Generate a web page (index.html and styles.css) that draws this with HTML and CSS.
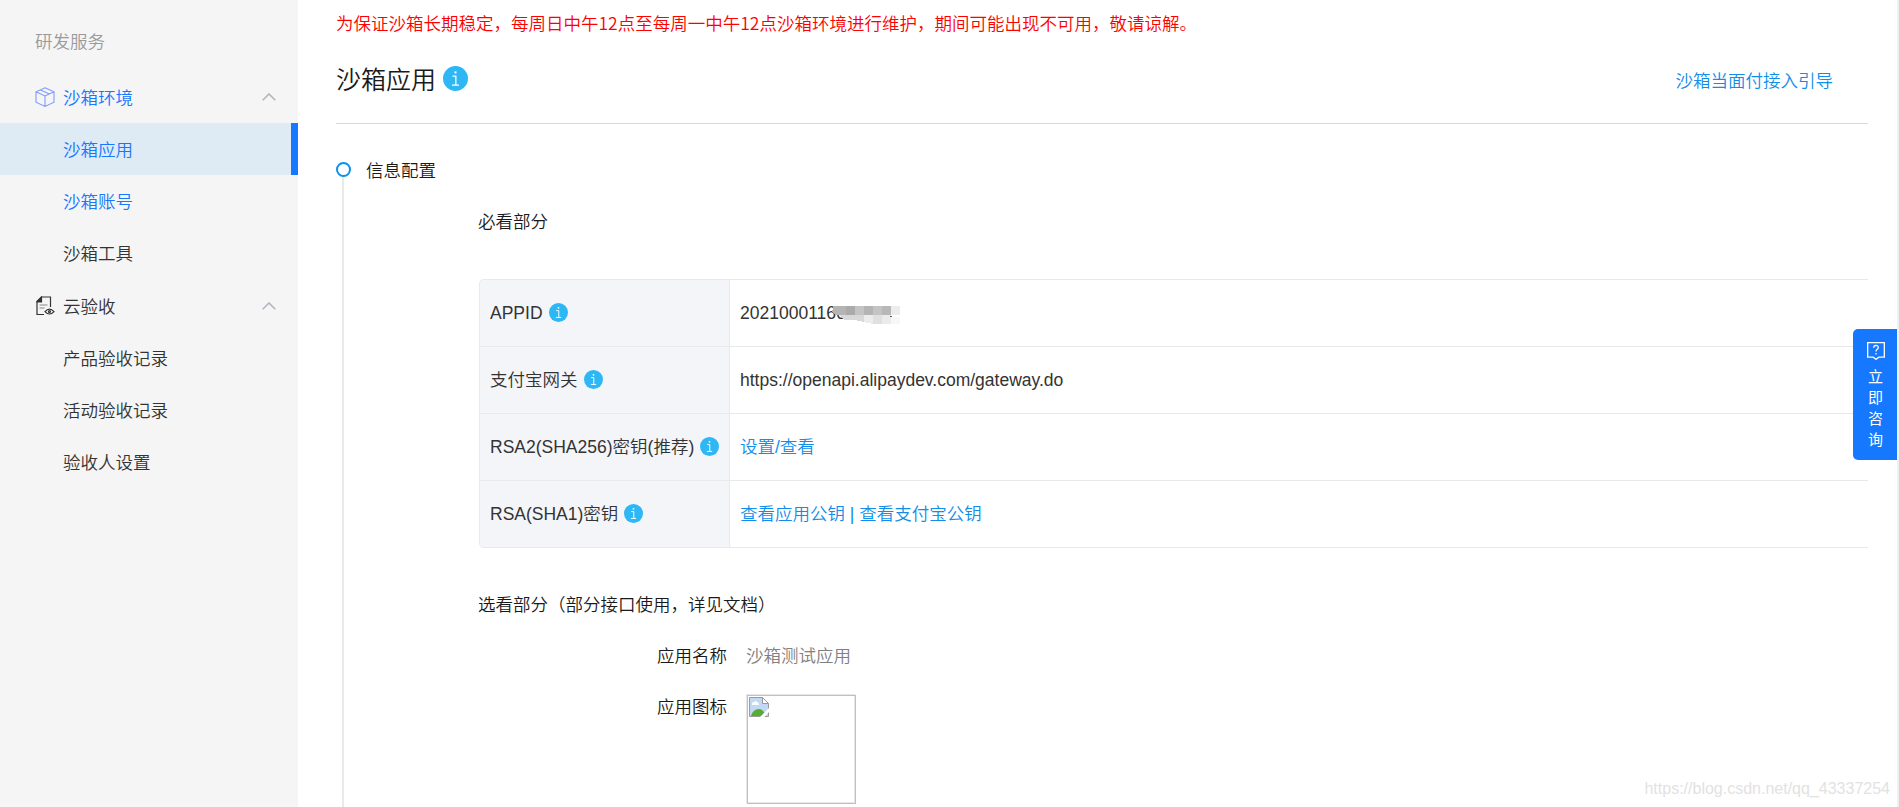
FILE: index.html
```
<!DOCTYPE html>
<html lang="zh-CN">
<head>
    <meta charset="UTF-8">
    <meta name="viewport" content="width=device-width, initial-scale=1.0">
    <title>沙箱应用</title>
    <link rel="stylesheet" href="styles.css">
</head>
<body>
    <svg class="defs" width="0" height="0">
        <symbol id="info" viewBox="0 0 20 20">
            <circle cx="10" cy="10" r="10" fill="#2db7f5"/>
            <path d="M7.6 8h2.7v6.9M7.2 15.2h5.6" fill="none" stroke="#fff" stroke-width="1"/>
            <rect x="9.2" y="4.3" width="1.6" height="1.6" fill="#fff"/>
        </symbol>
        <symbol id="arrow" viewBox="0 0 14 8">
            <path d="M.7 7.3L7 1l6.3 6.3" fill="none" stroke="#b4b4c0" stroke-width="1.6"/>
        </symbol>
    </svg>
    <div class="page">
        <nav class="sidebar">
            <div class="menu-title">研发服务</div>
            <div class="menu-group blue">
                <svg class="menu-icon" viewBox="0 0 20 20" fill="none" stroke="#7f9bff" stroke-width="1.1">
                    <path d="M10 .8l9 4v10.4l-9 4.2-9-4.2V4.800zM1 4.800l9 4.200 9-4.200M10 9v10.400M5.500 2.900l9 4.200"/>
                </svg>
                <span>沙箱环境</span>
                <svg class="menu-arrow"><use href="#arrow"/></svg>
            </div>
            <a class="menu-item active">沙箱应用</a>
            <a class="menu-item blue">沙箱账号</a>
            <a class="menu-item">沙箱工具</a>
            <div class="menu-group second">
                <svg class="menu-icon" viewBox="0 0 20 20" fill="none" stroke="#333" stroke-width="1.2">
                    <path d="M9 18.500H2V5.500L6.500 1H15.500V11"/>
                    <path d="M4.500 9H12.500M4.500 12H9.500" stroke="#888"/>
                    <path d="M2 6V5.500L6.500 1V6z" fill="#333"/>
                    <path d="M10 15.600Q14.500 10.800 19 15.600Q14.500 20.400 10 15.600z"/>
                    <circle cx="14.500" cy="15.600" r="1"/>
                </svg>
                <span>云验收</span>
                <svg class="menu-arrow"><use href="#arrow"/></svg>
            </div>
            <a class="menu-item">产品验收记录</a>
            <a class="menu-item">活动验收记录</a>
            <a class="menu-item">验收人设置</a>
        </nav>

        <main class="content">
            <p class="notice">为保证沙箱长期稳定，每周日中午12点至每周一中午12点沙箱环境进行维护，期间可能出现不可用，敬请谅解。</p>
            <header class="header">
                <h1>沙箱应用</h1>
                <svg class="info info-lg"><use href="#info"/></svg>
                <a class="guide">沙箱当面付接入引导</a>
            </header>

            <section class="step">
                <div class="step-line"><i class="dot"></i></div>
                <div class="step-main">
                    <h2>信息配置</h2>
                    <div class="step-body">
                        <h3>必看部分</h3>
                        <table class="config">
                            <tr>
                                <th>APPID<svg class="info"><use href="#info"/></svg></th>
                                <td>
                                    <span class="appid">2021000116<span>6</span>
                                        <svg class="mosaic" width="70" height="18" viewBox="0 0 70 18" shape-rendering="crispEdges">
                                            <path d="M3 0h12v9H5L1 6z" fill="#b4b4b4"/>
                                            <path d="M15 0h9v9h-9z" fill="#aaa"/>
                                            <path d="M24 0h9v9h-9zM42 0h9v9h-9z" fill="#c4c4c4"/>
                                            <path d="M33 0h9v9h-9z" fill="#b4b4b4"/>
                                            <path d="M51 0h9v9h-9z" fill="#b8b8b8"/>
                                            <path d="M60 0h9v9h-9z" fill="#ececec"/>
                                            <path d="M8 9h25v7l-9-2H13z" fill="#d8d8d8"/>
                                            <path d="M33 9h9v9l-9-2z" fill="#ececec"/>
                                            <path d="M42 9h9v9h-9z" fill="#e0e0e0"/>
                                            <path d="M51 9h9v9h-9z" fill="#ebebeb"/>
                                            <path d="M60 11h9v7h-9z" fill="#f7f7f7"/>
                                            <path d="M59 10h2v1h-2z" fill="#555"/>
                                        </svg>
                                    </span>
                                </td>
                            </tr>
                            <tr>
                                <th>支付宝网关<svg class="info"><use href="#info"/></svg></th>
                                <td>https://openapi.alipaydev.com/gateway.do</td>
                            </tr>
                            <tr>
                                <th>RSA2(SHA256)密钥(推荐)<svg class="info"><use href="#info"/></svg></th>
                                <td><a>设置/查看</a></td>
                            </tr>
                            <tr>
                                <th>RSA(SHA1)密钥<svg class="info"><use href="#info"/></svg></th>
                                <td><a>查看应用公钥 | 查看支付宝公钥</a></td>
                            </tr>
                        </table>
                        <h3>选看部分（部分接口使用，详见文档）</h3>
                        <div class="field">
                            <label>应用名称</label>
                            <span class="value">沙箱测试应用</span>
                        </div>
                        <div class="field">
                            <label>应用图标</label>
                            <div class="app-icon">
                                <div class="app-img">
                                    <svg width="20" height="20" viewBox="0 0 20 20">
                                        <path d="M.5.500h13l6 6v13H.5z" fill="#c3d7f7" stroke="#9a9a9a"/>
                                        <path d="M13.500.500v6h6z" fill="#fff" stroke="#9a9a9a"/>
                                        <path d="M3 7a2 2 0 0 1 2-2 2.500 2.500 0 0 1 4 1 1.500 1.500 0 0 1 1 2H3z" fill="#fff"/>
                                        <path d="M2 19c1-4 4-7 8-7 3 0 5 2 7 7z" fill="#56ad32"/>
                                        <path d="M20 11v4l-4.500 5H11z" fill="#fff"/>
                                    </svg>
                                </div>
                            </div>
                        </div>
                    </div>
                </div>
            </section>
        </main>
    </div>

    <a class="consult">
        <svg width="18" height="18" viewBox="0 0 18 18" fill="none" stroke="#fff" stroke-width="1.3">
            <path d="M.7.700h16.600v14.500h-5.500L9 17.300l-2.800-2.100H.7z"/>
            <path d="M6.700 5.800C6.700 2.700 11.300 2.700 11.300 5.500 11.300 7.500 9 7.200 9 9.600M9 11v1.600"/>
        </svg>
        <span>立</span><span>即</span><span>咨</span><span>询</span>
    </a>
    <div class="watermark">https://blog.csdn.net/qq_43337254</div>
</body>
</html>
```

FILE: styles.css
```
* {
    box-sizing: border-box;
}
body {
    margin: 0;
    height: 807px;
    overflow: hidden;
    background: #fff;
    color: #1a1a1a;
    font-family: "Noto Sans CJK SC", sans-serif;
    font-size: 17.5px;
    font-weight: 350;
    line-height: 26px;
}
h1, h2, h3, p {
    margin: 0;
    font-weight: 350;
}
svg {
    display: block;
}
.defs {
    position: absolute;
}
.page {
    display: flex;
    height: 807px;
    border-right: 2px solid #f0f0f0;
}

/* sidebar */
.sidebar {
    width: 298px;
    flex: none;
    background: #f5f5f5;
    color: #333;
}
.menu-title {
    height: 71px;
    padding: 28px 0 0 35px;
    color: #999;
}
.menu-group {
    display: flex;
    align-items: center;
    height: 52px;
    padding: 0 22px 0 35px;
}
.menu-group.second {
    margin-top: 1px;
}
.menu-icon {
    width: 20px;
    height: 20px;
    margin-right: 8px;
}
.menu-arrow {
    width: 14px;
    height: 8px;
    margin-left: auto;
}
.menu-item {
    display: block;
    height: 52px;
    padding-left: 63px;
    line-height: 52px;
}
.blue, .active {
    color: #1677ff;
}
.active {
    background: #deeaf4;
    border-right: 7px solid #1677ff;
}

/* content */
.content {
    flex: 1;
    display: flex;
    flex-direction: column;
    padding: 10px 29px 0 38px;
}
.notice {
    color: #f00;
}
.header {
    display: flex;
    align-items: center;
    height: 88px;
    padding-bottom: 3px;
    border-bottom: 1px solid #d9d9d9;
}
.header h1 {
    margin-top: -1px;
    font-size: 25px;
    line-height: 38px;
}
.info {
    display: inline-block;
    width: 19px;
    height: 19px;
    margin-left: 6px;
    vertical-align: -3px;
}
.info-lg {
    width: 25px;
    height: 25px;
    margin-left: 7px;
}
.guide {
    margin: 4px 35px 0 auto;
}
.guide, .config a {
    color: #108ee9;
}
.step {
    flex: 1;
    display: flex;
    padding-top: 38px;
}
.step-line {
    display: flex;
    flex-direction: column;
    width: 15px;
    margin-right: 15px;
}
.dot {
    width: 15px;
    height: 15px;
    border: 2px solid #108ee9;
    border-radius: 50%;
}
.step-line::after {
    content: "";
    flex: 1;
    width: 2px;
    margin-left: 6px;
    background: #e9e9e9;
}
.step-main {
    flex: 1;
}
h2, h3 {
    font-size: 17.5px;
    line-height: 26px;
}
.step-main h2 {
    margin-top: -5px;
}
.step-body {
    padding: 25px 0 0 112px;
}
.config {
    width: calc(100% - 1px);
    margin: 45px 0 43px 1px;
    border: 1px solid #e9e9e9;
    border-right: 0;
    border-radius: 5px 0 0 5px;
    border-spacing: 0;
    color: #333;
    font-family: "Liberation Sans", "Noto Sans CJK SC", sans-serif;
    overflow: hidden;
}
.config th, .config td {
    height: 67px;
    padding: 0 0 0 10px;
    border-bottom: 1px solid #e9e9e9;
    text-align: left;
    font-weight: 350;
}
.config tr:last-child th, .config tr:last-child td {
    height: 66px;
    border-bottom: 0;
}
.config th {
    width: 250px;
    background: #f4f5f9;
    border-right: 1px solid #e9e9e9;
    white-space: nowrap;
}
.appid {
    position: relative;
}
/* hides the last digits of the id */
.mosaic {
    position: absolute;
    left: 91px;
    top: 3px;
}
.field {
    display: flex;
    margin-top: 25px;
}
.field label {
    width: 249px;
    margin-right: 19px;
    text-align: right;
}
.value {
    color: #808080;
}
.app-icon {
    width: 109px;
    height: 109px;
    margin-top: 1px;
    border: 1px solid #e6e6e6;
}
.app-img {
    width: 109px;
    height: 109px;
    padding: 1px;
    border: 1px solid #c0c0c0;
}

/* floating entry */
.consult {
    position: absolute;
    top: 329px;
    right: 2px;
    display: flex;
    flex-direction: column;
    align-items: center;
    width: 44px;
    height: 131px;
    padding: 13px 0 0 1px;
    border-radius: 5px 0 0 5px;
    background: #1677ff;
    color: #fff;
    font-size: 15px;
    font-weight: 400;
    line-height: 21px;
}
.consult svg {
    margin-bottom: 5px;
}
.watermark {
    position: absolute;
    right: 9px;
    bottom: 5px;
    color: #e2e2e2;
    font-family: "Liberation Sans", sans-serif;
    font-size: 16px;
}
```
